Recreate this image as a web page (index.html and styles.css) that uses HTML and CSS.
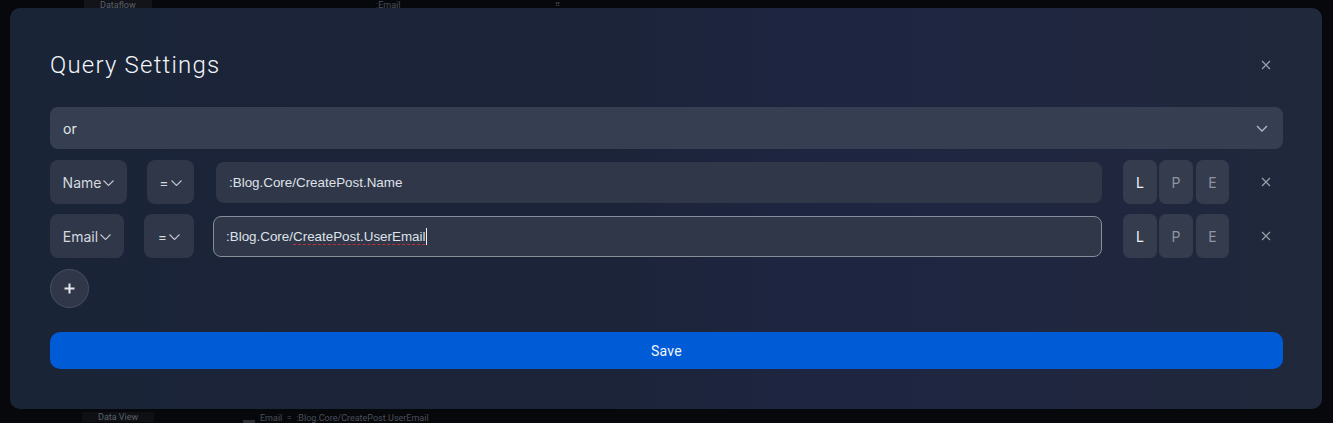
FILE: index.html
```html
<!DOCTYPE html>
<html>
<head>
<meta charset="utf-8">
<link rel="stylesheet" href="styles.css">
</head>
<body>
<div class="backdrop">
  <div class="bd-top">
    <span class="bd-tab">Dataflow</span>
    <span class="bd-email">:Email</span>
    <span class="bd-grip">⠿</span>
  </div>
  <div class="bd-bottom">
    <span class="bd-tab2">Data View</span>
    <span class="bd-pill"></span>
    <span class="bd-row">Email &nbsp;= &nbsp;:Blog.Core/CreatePost.UserEmail</span>
  </div>
</div>

<div class="modal">
  <div class="header">
    <h1 class="title">Query Settings</h1>
    <button class="close">
      <svg width="10" height="10" viewBox="0 0 10 10"><path d="M1 1L9 9M9 1L1 9" stroke="#9aa0ab" stroke-width="1.2" fill="none"/></svg>
    </button>
  </div>

  <div class="select-or">
    <span>or</span>
    <svg class="chev" width="12" height="7" viewBox="0 0 12 7"><path d="M1 1L6 6L11 1" stroke="#b4b9c4" stroke-width="1.3" fill="none"/></svg>
  </div>

  <div class="row">
    <div class="sel sel-field w-name"><span>Name</span><svg class="chev-s" width="11" height="6" viewBox="0 0 11 6"><path d="M0.5 0.5L5.5 5.5L10.5 0.5" stroke="#c3c7d0" stroke-width="1.1" fill="none"/></svg></div>
    <div class="sel sel-op op1"><span>=</span><svg class="chev-s" width="11" height="6" viewBox="0 0 11 6"><path d="M0.5 0.5L5.5 5.5L10.5 0.5" stroke="#c3c7d0" stroke-width="1.1" fill="none"/></svg></div>
    <div class="input in1">:Blog.Core/CreatePost.Name</div>
    <div class="lpe">
      <span class="btn on">L</span><span class="btn">P</span><span class="btn e">E</span>
    </div>
    <button class="rm"><svg width="10" height="10" viewBox="0 0 10 10"><path d="M1 1L9 9M9 1L1 9" stroke="#9aa0ab" stroke-width="1.2" fill="none"/></svg></button>
  </div>

  <div class="row">
    <div class="sel sel-field w-email"><span>Email</span><svg class="chev-s" width="11" height="6" viewBox="0 0 11 6"><path d="M0.5 0.5L5.5 5.5L10.5 0.5" stroke="#c3c7d0" stroke-width="1.1" fill="none"/></svg></div>
    <div class="sel sel-op op2"><span>=</span><svg class="chev-s" width="11" height="6" viewBox="0 0 11 6"><path d="M0.5 0.5L5.5 5.5L10.5 0.5" stroke="#c3c7d0" stroke-width="1.1" fill="none"/></svg></div>
    <div class="input in2 focus">:Blog.Core/<span class="spell">CreatePost.UserEmail</span><span class="caret"></span></div>
    <div class="lpe">
      <span class="btn on">L</span><span class="btn">P</span><span class="btn e">E</span>
    </div>
    <button class="rm"><svg width="10" height="10" viewBox="0 0 10 10"><path d="M1 1L9 9M9 1L1 9" stroke="#9aa0ab" stroke-width="1.2" fill="none"/></svg></button>
  </div>

  <button class="add">
    <svg width="11" height="11" viewBox="0 0 11 11"><path d="M5.5 0.5V10.5M0.5 5.5H10.5" stroke="#e6e8ed" stroke-width="2" fill="none"/></svg>
  </button>

  <button class="save">Save</button>
</div>
</body>
</html>
```

FILE: styles.css
```css
* { box-sizing: border-box; }
html, body { margin: 0; padding: 0; }
body {
  width: 1333px;
  height: 423px;
  background: #07080b;
  overflow: hidden;
  position: relative;
  font-family: "Liberation Sans", Arial, sans-serif;
  padding: 8px 11px 14px 10px;
}
.backdrop {
  position: absolute;
  inset: 0;
  color: #4a505c;
  font-family: Roboto, sans-serif;
  font-size: 9px;
  line-height: 10px;
}
.bd-top { position: absolute; left: 0; top: 0; width: 100%; height: 8px; }
.bd-tab { position: absolute; left: 84px; top: 0; padding: 0 16px; background: #121419; color: #5a606c; }
.bd-email { position: absolute; left: 376px; top: 0; }
.bd-grip { position: absolute; left: 555px; top: 0; font-size: 7px; }
.bd-bottom { position: absolute; left: 0; top: 409px; width: 100%; height: 14px; }
.bd-tab2 { position: absolute; left: 82px; top: 3px; padding: 0 16px; background: #0e1014; color: #5a606c; }
.bd-pill { position: absolute; left: 243px; top: 11px; width: 12px; height: 3px; background: #2a2e36; }
.bd-row { position: absolute; left: 260px; top: 4px; }

.modal {
  position: relative;
  width: 1312px;
  height: 401px;
  border-radius: 10px;
  background: linear-gradient(90deg, #1a2437 0%, #1c2439 45%, #1e2541 62%, #1f2640 75%, #20283b 100%);
  padding: 40px 39px 40px 40px;
  display: flex;
  flex-direction: column;
}
.header {
  display: flex;
  align-items: center;
  justify-content: space-between;
  height: 34px;
  margin-bottom: 25px;
}
.title {
  margin: 0;
  font-family: Roboto, sans-serif;
  font-weight: 300;
  font-size: 24px;
  letter-spacing: 1.2px;
  color: #f3f5f8;
  line-height: 34px;
}
.close, .rm {
  width: 34px;
  height: 34px;
  border: 0;
  background: transparent;
  padding: 0;
  display: flex;
  align-items: center;
  justify-content: center;
}
.select-or {
  height: 42px;
  border-radius: 8px;
  background: #363e51;
  display: flex;
  align-items: center;
  justify-content: space-between;
  padding: 0 15px 0 13px;
  color: #e2e5ea;
  font-family: Inter, sans-serif;
  font-size: 14px;
  margin-bottom: 11px;
}
.row {
  display: flex;
  align-items: center;
  height: 44px;
  margin-bottom: 10px;
}
.sel {
  height: 44px;
  border-radius: 8px;
  background: #2f3749;
  display: flex;
  align-items: center;
  justify-content: center;
  color: #d5d8df;
  font-family: Inter, sans-serif;
  font-size: 14px;
  gap: 2px;
}
.chev-s { margin-top: 1px; }
.w-name { width: 77px; margin-right: 20px; }
.w-email { width: 74px; margin-right: 20px; }
.op1 { width: 47px; margin-right: 22px; }
.op2 { width: 50px; margin-right: 19px; }
.input {
  flex: 1;
  height: 41px;
  border-radius: 8px;
  background: #2f3749;
  border: 1px solid transparent;
  display: flex;
  align-items: center;
  padding: 0 12px;
  color: #dfe2e8;
  font-size: 13.4px;
  white-space: pre;
}
.input.focus { border-color: #878d99; }
.spell {
  text-decoration: underline dashed #c0303a;
  text-underline-offset: 3px;
  text-decoration-thickness: 1px;
}
.caret { display: inline-block; width: 1px; height: 17px; background: #f0f2f5; margin-left: 1px; }
.lpe {
  display: flex;
  margin-left: 21px;
  margin-right: 20px;
}
.btn {
  width: 34px;
  height: 44px;
  border-radius: 7px;
  background: #353c4e;
  display: flex;
  align-items: center;
  justify-content: center;
  color: #8f95a0;
  font-family: Inter, sans-serif;
  font-size: 14px;
}
.btn + .btn { margin-left: 2px; }
.btn.e { width: 33px; margin-left: 3px; }
.btn.on { color: #f0f2f6; font-weight: 400; }
.add {
  width: 39px;
  height: 39px;
  border-radius: 50%;
  background: #2f3749;
  border: 1px solid #465064;
  display: flex;
  align-items: center;
  justify-content: center;
  padding: 0;
  margin-top: 1px;
  margin-bottom: 24px;
}
.save {
  height: 37px;
  border: 0;
  border-radius: 10px;
  background: #005bd6;
  color: #f2f5fa;
  font-family: Roboto, sans-serif;
  font-size: 14px;
  letter-spacing: 0.3px;
  padding: 0;
}
```
